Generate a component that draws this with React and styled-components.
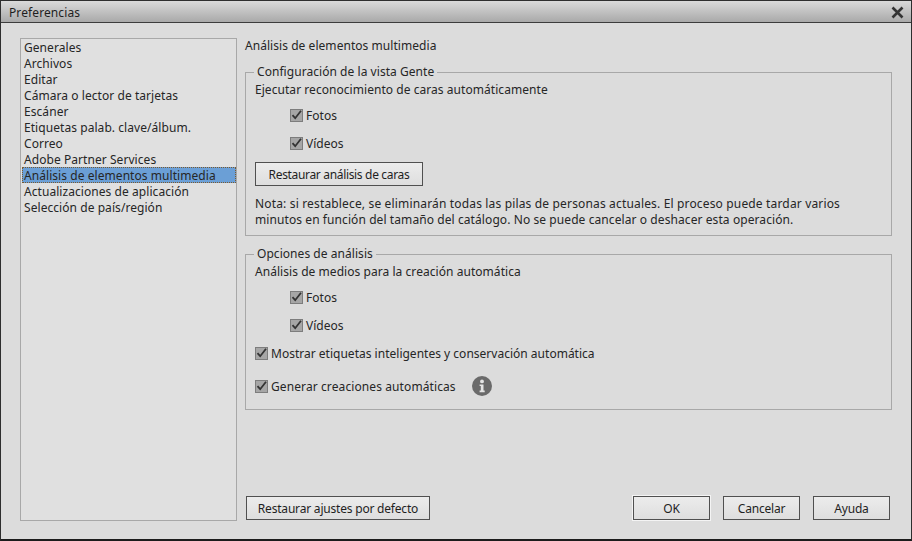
import React from "react";
import styled, { createGlobalStyle } from "styled-components";

const Global = createGlobalStyle`
  html, body { margin: 0; padding: 0; background: #dcdcdc; }
  body { font-family: "Noto Sans", "Liberation Sans", sans-serif; font-size: 12px; color: #262626; }
`;

const Window = styled.div`
  width: 912px; height: 541px; box-sizing: border-box;
  display: flex; flex-direction: column;
  border: 1px solid #2e2e2e;
  border-bottom: 2px solid #1c1c1c;
  background: #dcdcdc; overflow: hidden;
`;
const TitleBar = styled.header`
  height: 22px; flex: none; box-sizing: border-box;
  display: flex; align-items: center; justify-content: space-between;
  padding: 1px 7px 0 8px;
  background: linear-gradient(#dadada, #a9a9a9);
  border-bottom: 1px solid #3c3c3c;
`;
const Title = styled.h1`
  margin: 0; font: inherit; font-size: 12px; letter-spacing: 0.1px; color: #1e1e1e;
`;
const Body = styled.main`
  flex: 1; min-height: 0; display: flex; gap: 8px;
  padding: 15px 19px 18px 19px;
`;
const List = styled.ul`
  list-style: none; margin: 0; padding: 0 0 0 1px; box-sizing: border-box;
  width: 217px; flex: none;
  background: #e0e0e0; border: 1px solid #a8a8a8;
`;
const Item = styled.li`
  height: 16px; line-height: 15px; padding: 1px 0 0 2px; white-space: nowrap;
  box-sizing: border-box; letter-spacing: 0.06px;
  background: ${(p) => (p.$selected ? "#6b9fd6" : "transparent")};
  outline: ${(p) => (p.$selected ? "1px dotted #7a5a30" : "none")};
  outline-offset: -1px;
`;
const Panel = styled.section`
  flex: 1; min-width: 0; display: flex; flex-direction: column;
`;
const Heading = styled.h2`
  margin: 0; font: inherit; height: 16px; line-height: 16px; letter-spacing: 0.05px;
`;
const Group = styled.fieldset`
  margin: ${(p) => p.$top} 0 0 0; padding: 2px 9px 0;
  width: 647px; box-sizing: border-box; height: ${(p) => p.$height};
  border: 1px solid #a8a8a8; min-width: 0;
  display: flex; flex-direction: column;
`;
const Legend = styled.legend`
  margin-left: -1px; padding: 0 3px; line-height: 16px; letter-spacing: 0.05px;
`;
const Line = styled.p`
  margin: 0; line-height: 16px; letter-spacing: 0.05px;
`;
const Lead = styled(Line)`
  margin-bottom: 3px;
`;
const CheckRow = styled.label`
  display: flex; align-items: center; gap: 3px;
  height: ${(p) => p.$h || "28px"}; flex: none;
  padding-left: ${(p) => (p.$indent ? "35px" : "0")};
  letter-spacing: ${(p) => p.$ls || "0.03px"}; white-space: nowrap;
`;
const Box = styled.span`
  width: 13px; height: 13px; flex: none; box-sizing: border-box;
  display: flex; align-items: center; justify-content: center;
  background: #a6a6a6; border: 1px solid #7d7d7d;
`;
const Check = () => (
  <Box>
    <svg width="11" height="11" viewBox="0 0 11 11">
      <path d="M1.5 5.2 L4.2 8.2 L10 0.8" fill="none" stroke="#333" strokeWidth="1.8" />
    </svg>
  </Box>
);
const Button = styled.button`
  box-sizing: border-box; width: ${(p) => p.$w}; height: 24px; padding: 0;
  font: inherit; color: #1f1f1f; letter-spacing: -0.2px;
  background: linear-gradient(#ececec, #dedede);
  border: 1px solid #505050;
  box-shadow: ${(p) => (p.$default ? "0 0 0 1px #f4f4f4" : "none")};
`;
const FaceButton = styled(Button)`
  margin-top: 5px; flex: none;
  letter-spacing: -0.33px;
`;
const Note = styled.div`
  margin-top: 10px;
`;
const NoteLine = styled(Line)`
  letter-spacing: ${(p) => p.$ls};
`;
const InfoWrap = styled.span`
  display: inline-flex; margin-left: 13px;
`;
const Info = () => (
  <InfoWrap>
    <svg width="20" height="20" viewBox="0 0 20 20">
      <circle cx="10" cy="10" r="10" fill="#6a6a6a" />
      <circle cx="10" cy="5.4" r="1.9" fill="#e4e4e4" />
      <path d="M7.6 8.4h3.9v6.2h1.2v1.6H7.6v-1.6h1.2v-4.6H7.6z" fill="#e4e4e4" />
    </svg>
  </InfoWrap>
);
const Footer = styled.footer`
  margin-top: auto; margin-bottom: 1px;
  display: flex; align-items: center; padding-left: 1px; width: 645px; box-sizing: border-box;
`;
const FooterRight = styled.div`
  margin-left: auto; display: flex; gap: 13px;
`;

const items = [
  "Generales", "Archivos", "Editar", "Cámara o lector de tarjetas", "Escáner",
  "Etiquetas palab. clave/álbum.", "Correo", "Adobe Partner Services",
  "Análisis de elementos multimedia", "Actualizaciones de aplicación", "Selección de país/región",
];

export default function App() {
  return (
    <>
      <Global />
      <Window>
        <TitleBar>
          <Title>Preferencias</Title>
          <svg width="13" height="13" viewBox="0 0 13 13">
            <path d="M1.5 1.5 L11.5 11.5 M11.5 1.5 L1.5 11.5" stroke="#333" strokeWidth="2.6" />
          </svg>
        </TitleBar>
        <Body>
          <List>
            {items.map((t, i) => (
              <Item key={t} $selected={i === 8}>{t}</Item>
            ))}
          </List>
          <Panel>
            <Heading>Análisis de elementos multimedia</Heading>
            <Group $top="10px" $height="172px">
              <Legend>Configuración de la vista Gente</Legend>
              <Lead>Ejecutar reconocimiento de caras automáticamente</Lead>
              <CheckRow $indent><Check />Fotos</CheckRow>
              <CheckRow $indent><Check />Vídeos</CheckRow>
              <FaceButton $w="168px">Restaurar análisis de caras</FaceButton>
              <Note>
                <NoteLine $ls="0.16px">Nota: si restablece, se eliminarán todas las pilas de personas actuales. El proceso puede tardar varios</NoteLine>
                <NoteLine $ls="0.085px">minutos en función del tamaño del catálogo. No se puede cancelar o deshacer esta operación.</NoteLine>
              </Note>
            </Group>
            <Group $top="10px" $height="164px">
              <Legend>Opciones de análisis</Legend>
              <Lead>Análisis de medios para la creación automática</Lead>
              <CheckRow $indent><Check />Fotos</CheckRow>
              <CheckRow $indent><Check />Vídeos</CheckRow>
              <CheckRow $ls="0.01px"><Check />Mostrar etiquetas inteligentes y conservación automática</CheckRow>
              <CheckRow $h="38px" $ls="0.1px"><Check />Generar creaciones automáticas<Info /></CheckRow>
            </Group>
            <Footer>
              <Button $w="184px">Restaurar ajustes por defecto</Button>
              <FooterRight>
                <Button $w="77px" $default>OK</Button>
                <Button $w="77px">Cancelar</Button>
                <Button $w="77px">Ayuda</Button>
              </FooterRight>
            </Footer>
          </Panel>
        </Body>
      </Window>
    </>
  );
}
